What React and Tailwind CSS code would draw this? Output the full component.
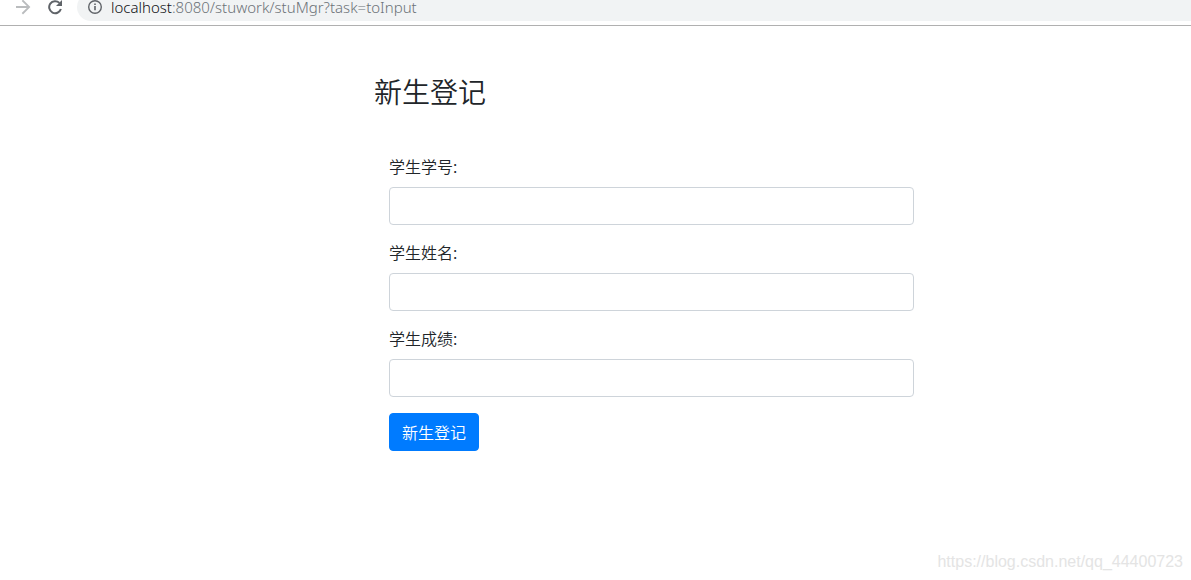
import React from "react";

const fields = [
  { id: "sno", label: "学生学号:" },
  { id: "sname", label: "学生姓名:" },
  { id: "score", label: "学生成绩:" },
];

function AddressBar() {
  return (
    <header className="flex h-[26px] items-end overflow-hidden border-b border-[#b0b0b0] bg-white pb-1">
      <div className="flex h-7 w-full shrink-0 items-center">
        <button type="button" aria-label="Forward" className="ml-[15px] text-[#babcbe]">
          <svg width="16" height="16" viewBox="0 0 16 16" fill="currentColor">
            <path d="M8 0.6 6.7 1.9 11.8 7H1v2h10.8l-5.1 5.1L8 15.4 15.4 8z" />
          </svg>
        </button>
        <button type="button" aria-label="Reload" className="ml-4 text-[#5f6368]">
          <svg width="16" height="16" viewBox="0 0 16 16" fill="none">
            <path d="M13.9 10A6 6 0 1 1 12.4 3.9" stroke="currentColor" strokeWidth="2" />
            <path d="M15 1v6H9z" fill="currentColor" />
          </svg>
        </button>
        <div className="ml-[14px] flex h-7 flex-1 items-center rounded-l-full bg-[#f1f3f4] pl-[10px]">
          <svg width="16" height="16" viewBox="0 0 16 16" fill="none" className="text-[#5f6368]">
            <circle cx="8" cy="8" r="6.3" stroke="currentColor" strokeWidth="1.4" />
            <path d="M7.2 7h1.6v4.3H7.2zM7.2 4.6h1.6v1.5H7.2z" fill="currentColor" />
          </svg>
          <span className="ml-2 font-['Noto_Sans',sans-serif] text-[15px] leading-[14px] font-light text-[#6c7277]">
            <span className="text-[#101114]">localhost</span>:8080/stuwork/stuMgr?task=toInput
          </span>
        </div>
      </div>
    </header>
  );
}

export default function App() {
  return (
    <div className="flex min-h-screen flex-col bg-white font-['Noto_Sans_CJK_SC',sans-serif] font-[350] text-[#212529]">
      <AddressBar />

      <main className="ml-[31.4%] max-w-[555px] pt-12">
        <h3 className="text-[28px] leading-[34px]">新生登记</h3>

        <form className="mt-[47px] px-[15px]" onSubmit={(e) => e.preventDefault()}>
          {fields.map((f) => (
            <div key={f.id} className="mb-4">
              <label htmlFor={f.id} className="mb-[10px] block text-base leading-[22px]">
                {f.label}
              </label>
              <input
                id={f.id}
                name={f.id}
                type="text"
                className="block h-[38px] w-full rounded border border-[#ced4da] bg-white px-3 text-base text-[#495057] outline-none focus:border-[#80bdff]"
              />
            </div>
          ))}
          <button
            type="submit"
            className="h-[38px] rounded border border-[#007bff] bg-[#007bff] px-3 text-base leading-6 text-white"
          >
            新生登记
          </button>
        </form>
      </main>

      <footer className="mt-auto pr-2 pb-[6px] text-right font-['Liberation_Sans',sans-serif] text-base leading-6 text-[#e4e4e4]">
        https://blog.csdn.net/qq_44400723
      </footer>
    </div>
  );
}
